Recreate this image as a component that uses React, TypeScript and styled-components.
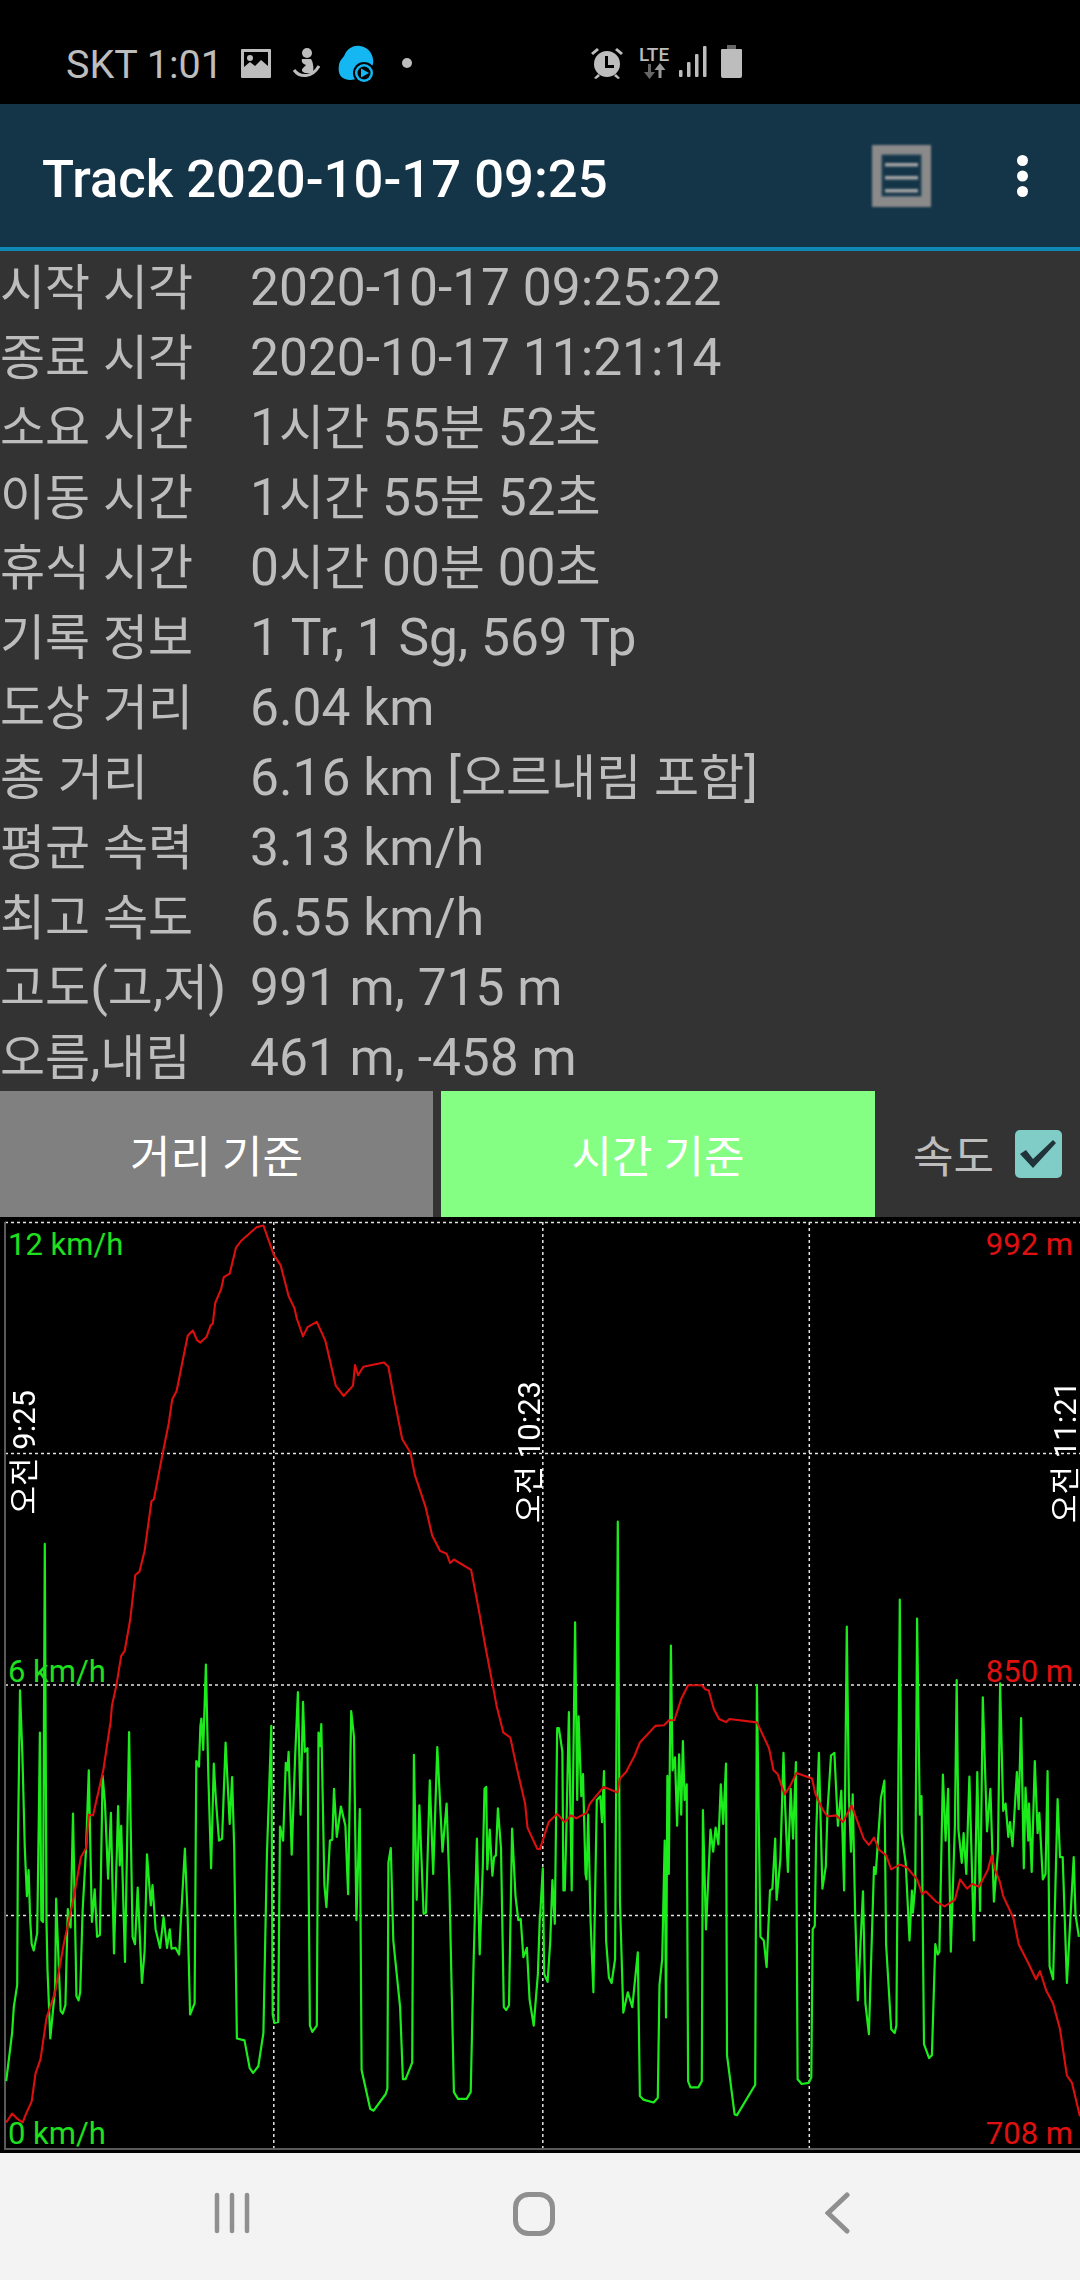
import React from "react";
import styled, { createGlobalStyle } from "styled-components";

const Global = createGlobalStyle`
  html, body { margin: 0; padding: 0; background: #000; }
  body { font-family: Roboto, "Noto Sans CJK KR", sans-serif; }
  #root { width: 1080px; height: 2280px; overflow: hidden; }
`;

const FONT = `Roboto, "Noto Sans CJK KR", sans-serif`;

const Page = styled.div`
  width: 1080px;
  height: 2280px;
  display: flex;
  flex-direction: column;
  background: #333;
  font-family: ${FONT};
`;

const StatusBar = styled.div`
  height: 104px;
  background: #000;
  display: flex;
  align-items: flex-start;
  padding: 45px 0 0 66px;
  box-sizing: border-box;
  color: #bcbcbc;
`;

const StatusText = styled.span`
  font-size: 39.5px;
  line-height: 40px;
  width: 175px;
  white-space: nowrap;
  color: #bdbdbd;
`;

const StatusIcon = styled.svg<{ $ml?: number; $mt?: number }>`
  display: block;
  flex: none;
  margin-left: ${(p) => p.$ml ?? 0}px;
  margin-top: ${(p) => p.$mt ?? 0}px;
`;

const LteBlock = styled.div`
  width: 30px;
  margin-left: 15px;
  margin-top: 1px;
  display: flex;
  flex-direction: column;
  align-items: center;
`;

const LteText = styled.span`
  font-size: 19px;
  line-height: 17px;
  font-weight: 500;
  color: #bdbdbd;
`;

const Header = styled.header`
  height: 147px;
  box-sizing: border-box;
  background: #143548;
  border-bottom: 4px solid #1088b5;
  display: flex;
  align-items: center;
  padding-left: 42px;
`;

const Title = styled.h1`
  margin: 0;
  padding-top: 6px;
  flex: 1;
  font-size: 52.6px;
  line-height: 60px;
  font-weight: 500;
  color: #fff;
  white-space: nowrap;
`;

const ListIcon = styled.svg`
  display: block;
  flex: none;
  filter: blur(0.8px);
  margin-right: 86px;
`;

const MoreIcon = styled.svg`
  display: block;
  flex: none;
  margin-right: 52px;
`;

const InfoList = styled.div`
  height: 840px;
  display: flex;
  flex-direction: column;
  background: #333;
`;

const InfoRow = styled.div`
  height: 70px;
  box-sizing: border-box;
  padding-top: 4px;
  display: grid;
  grid-template-columns: 250px 1fr;
  align-items: start;
  font-size: 51.5px;
  line-height: 66px;
  color: #bdbdbd;
  white-space: nowrap;
`;

const InfoCell = styled.span``;

const Hangul = styled.span`
  font-size: 49px;
`;

const ModeBar = styled.div`
  height: 126px;
  display: flex;
  background: #333;
`;

const ModeButton = styled.div<{ $active?: boolean; $w: number }>`
  width: ${(p) => p.$w}px;
  margin-right: 8px;
  background: ${(p) => (p.$active ? "#84ff84" : "#808080")};
  color: #fff;
  font-size: 44px;
  display: flex;
  align-items: center;
  justify-content: center;
`;

const SpeedToggle = styled.div`
  display: flex;
  align-items: center;
  margin-left: 30px;
  font-size: 44px;
  color: #bdbdbd;
`;

const CheckBox = styled.div`
  width: 47px;
  height: 48px;
  margin-left: 21px;
  border-radius: 5px;
  background: #7fcdc6;
  display: flex;
  align-items: center;
  justify-content: center;
`;

const Chart = styled.div`
  position: relative;
  height: 936px;
  background: #000;
  overflow: hidden;
`;

const ChartSvg = styled.svg`
  position: absolute;
  inset: 0;
  display: block;
`;

const AxisLabel = styled.span<{ $color: string; $top: number; $side: "left" | "right" }>`
  position: absolute;
  top: ${(p) => p.$top}px;
  ${(p) => (p.$side === "left" ? "left: 8px;" : "right: 7px;")}
  font-size: 31px;
  line-height: 30px;
  color: ${(p) => p.$color};
  white-space: nowrap;
`;

const TimeLabel = styled.span<{ $left: number; $bottom: number }>`
  position: absolute;
  left: ${(p) => p.$left}px;
  bottom: ${(p) => p.$bottom}px;
  writing-mode: vertical-rl;
  text-orientation: sideways;
  transform: rotate(180deg);
  font-size: 31px;
  line-height: 30px;
  color: #fff;
  white-space: nowrap;
`;

const NavBar = styled.nav`
  flex: 1;
  background: #f3f3f3;
  display: flex;
  align-items: flex-start;
  padding: 39px 0 0 214px;
`;

const NavIcon = styled.svg<{ $ml?: number }>`
  display: block;
  flex: none;
  margin-left: ${(p) => p.$ml ?? 0}px;
`;

const z3 = (a: number[]) => pairs(a, (x, y) => [x / 2.904, 1210 + y / 2.904]);
const z4 = (a: number[]) => pairs(a, (x, y) => [540 + x / 2.904, 1210 + y / 2.904]);
const z5 = (a: number[]) => pairs(a, (x, y) => [x / 2.904, 1700 + y / 2.703]);
const z6 = (a: number[]) => pairs(a, (x, y) => [540 + x / 2.904, 1700 + y / 2.703]);

function pairs(a: number[], f: (x: number, y: number) => number[]) {
  const out: string[] = [];
  for (let i = 0; i + 1 < a.length; i += 2) {
    const [x, y] = f(a[i], a[i + 1]);
    out.push(`${x.toFixed(1)},${y.toFixed(1)}`);
  }
  return out;
}

const redPts = [
  ...z5([18,1142,35,1118,48,1130,66,1142,75,1120,92,1085,103,1010,118,970,135,860,160,790,185,660,215,530,235,425,250,400,258,310,270,312,300,190,320,65]),
  ...z3([320,1500,325,1440,338,1380,352,1295,362,1280,378,1190,393,1060,405,1050,420,990,440,845,447,840,470,720,490,620,500,550,513,525,530,440,545,365,560,350,572,378,582,385,600,368,612,335,618,330,625,270,642,230,650,195,667,185,685,110,700,90,745,50,765,45,795,130,815,160,838,250,855,285,862,315,880,367,893,340,920,325,945,380,975,510,998,540,1025,510,1031,450,1040,480,1055,455,1115,443,1128,455,1145,550,1168,665,1192,705,1205,770,1235,860,1255,945,1278,990,1297,998,1307,1025,1318,1015,1368,1045,1390,1160,1410,1270,1432,1385,1442,1440,1462,1518,1482,1532]),
  ...z5([1500,180,1525,280,1532,345,1560,402]),
  ...z6([0,403,25,330,50,308,72,330,90,312,105,320,135,305,145,280,185,235,225,250,232,212,250,195,275,150,290,115,335,70,360,68,375,55,390,55]),
  ...z4([410,1420,430,1380,470,1380,480,1392,490,1395,505,1450,520,1478,540,1487,550,1478,630,1488]),
  ...z6([665,130,678,190,690,200,710,255,725,235,745,197,790,212,800,255,820,295,835,315,860,312,880,330,905,285,940,375,955,392,970,372,985,405,1005,420,1020,458,1045,445,1065,452,1095,485,1110,525,1120,517,1150,545,1175,558,1205,540,1220,485,1240,510,1255,497,1275,505,1300,460,1312,420,1320,455,1335,490,1345,530,1375,590,1390,660,1420,715,1440,755,1452,733,1470,785,1490,820,1510,890,1530,1015,1545,1035,1568,1125]),
].join(" ");

const greenPts = [
  ...z5([18,1030,35,900,40,830,50,770,52,400,58,-26,65,150,72,400,78,530,83,460,88,600,92,660,98,677,108,630,113,300,116,88,120,595,125,600,130,-422,135,600,138,730,146,915,160,780,163,537,170,700,176,840,182,848,190,825,197,565,205,615,212,307,220,700,222,800,228,812,233,790,240,570,250,400,258,190,267,600,275,512,282,640,290,635,298,205,305,280,314,483,322,305,331,685,343,287,348,447,352,340,363,708,375,87,385,640,392,660,400,507,412,765,420,680,427,417,438,555,443,500,452,620,465,670,475,587,485,670,493,620,498,672,510,670,520,688,525,600,537,402,545,590,552,850,565,820,570,165,578,180,582,70,585,50,590,135,598,-96,605,200,613,455,621,172,627,270,636,380,645,375,655,115,667,335,674,208,680,400,688,915,710,920,725,995,735,1008,750,990,765,900,775,420,788,70,792,850,797,873,808,870,813,342,822,380,830,170,835,190,838,140,847,418,857,155,865,-21,873,310,880,5,885,140,893,130,900,880,907,897,920,880,925,88,930,125,933,65,942,500,948,560,958,380,965,378,970,240,978,370,990,288,1003,340,1011,525,1020,30,1028,100,1035,595,1045,295,1050,1000,1075,1105,1085,1110,1120,1065,1125,1050,1128,440,1135,400,1142,650,1162,830,1170,1025,1178,1025,1197,980,1202,148,1210,540,1218,285,1230,578,1237,575,1248,217,1258,470,1270,127,1285,410,1297,280,1305,500,1318,1060,1330,1078,1355,1078,1367,1060,1375,720,1385,375,1393,688,1402,450,1407,240,1412,235,1415,458,1422,350,1430,475,1435,425,1440,420,1446,293,1455,400,1463,830,1470,838,1478,825,1487,348,1497,530,1505,595,1512,592,1520,695,1530,670,1538,810,1550,880,1562,740,1568,580]),
  ...z6([0,590,8,455,12,740,22,762,30,650,36,487,43,605,50,76,55,76,65,140,68,515,72,515,76,370,84,33,92,515,102,-210,108,270,112,44,120,260,125,200,132,470,135,485,140,310,147,600,155,790,165,270,175,260,180,330,186,192,192,650,200,750,208,765,218,700,226,-482,232,540,242,845,255,790,268,830,284,682,290,1070,300,1080,330,1088,342,1075,347,770,355,700,362,380,366,858,370,205,374,470,380,-147,385,190,392,155,398,340,404,147,410,310,415,111,420,270,426,228,430,1030,437,1047,460,1047,470,1030,473,298,482,620,495,350,503,410,510,345,518,390,525,228,532,335,540,172,543,960,565,1120,572,1122,625,1040,630,-40,640,640,650,650,658,722,668,515,675,510,683,375,687,540,698,430,707,143,712,290,720,465,728,240,735,375,743,168,748,1025,760,1038,780,1035,788,1020,792,620,798,610,802,360,810,143,820,510,830,450,835,300,845,150,855,143,865,340,875,245,883,515,891,-198,897,260,903,410,908,255,915,570,923,812,938,517,945,820,955,903,970,452,975,470,990,265,1000,218,1005,660,1020,890,1030,900,1035,880,1045,-271,1050,360,1062,440,1073,650,1080,515,1083,575,1090,500,1095,-220,1103,310,1108,260,1115,930,1130,968,1138,960,1148,660,1155,688,1160,680,1170,202,1178,380,1185,240,1193,680,1205,340,1210,-54,1215,350,1225,440,1230,360,1238,470,1247,207,1260,650,1270,195,1278,570,1286,-7,1298,355,1308,240,1318,545,1330,405,1336,-45,1345,300,1352,280,1360,370,1365,330,1372,395,1385,195,1390,295,1397,49,1405,455,1410,237,1418,380,1420,280,1428,465,1437,165,1445,360,1450,305,1460,485,1468,470,1474,192,1480,720,1490,755,1503,268,1510,425,1518,425,1530,765,1550,425,1555,580,1565,640]),
].join(" ");

const rows: [string, string][] = [
  ["시작 시각", "2020-10-17 09:25:22"],
  ["종료 시각", "2020-10-17 11:21:14"],
  ["소요 시간", "1시간 55분 52초"],
  ["이동 시간", "1시간 55분 52초"],
  ["휴식 시간", "0시간 00분 00초"],
  ["기록 정보", "1 Tr, 1 Sg, 569 Tp"],
  ["도상 거리", "6.04 km"],
  ["총 거리", "6.16 km [오르내림 포함]"],
  ["평균 속력", "3.13 km/h"],
  ["최고 속도", "6.55 km/h"],
  ["고도(고,저)", "991 m, 715 m"],
  ["오름,내림", "461 m, -458 m"],
];

const hLines = [1222.5, 1453.5, 1685, 1915.5];
const vLines = [273.8, 542.8, 809.3];

function Mixed({ text }: { text: string }) {
  return (
    <InfoCell>
      {text.split(/([가-힣]+)/).map((part, i) =>
        i % 2 === 1 ? <Hangul key={i}>{part}</Hangul> : part
      )}
    </InfoCell>
  );
}

export default function App() {
  return (
    <Page>
      <Global />
      <StatusBar>
        <StatusText>SKT 1:01</StatusText>
        <StatusIcon width="30" height="29" viewBox="0 0 30 29" $mt={4}>
          <path fill="#bdbdbd" fillRule="evenodd" d="M1 0h28a1 1 0 0 1 1 1v27a1 1 0 0 1-1 1H1a1 1 0 0 1-1-1V1a1 1 0 0 1 1-1zM3 3v15l6-5 5 4 6-6 7 6V3z" />
          <circle cx="9" cy="9" r="3" fill="#bdbdbd" />
        </StatusIcon>
        <StatusIcon width="28" height="30" viewBox="0 0 28 30" $ml={21} $mt={3} fill="#bdbdbd">
          <circle cx="15" cy="5" r="5" />
          <path d="M10 11h9c2 3 3 8 2 14h-8c-3-1-4-3-2-5l3-3c-3-1-5-3-4-6z" />
          <path d="M2 22c6 8 18 8 25-4" fill="none" stroke="#bdbdbd" strokeWidth="3" />
        </StatusIcon>
        <StatusIcon width="40" height="40" viewBox="0 0 40 40" $ml={16}>
          <path fill="#15b7f2" d="M3 20C4 14 7 14 9 9c3-6 9-9 15-8 7 1 12 6 13 13 1 5-1 8-4 10-2 4-6 6-10 8-4 3-9 4-14 2-6-2-7-8-6-14z" />
          <circle cx="28" cy="28" r="11" fill="#000" />
          <circle cx="28" cy="28" r="9" fill="#15b7f2" />
          <circle cx="28" cy="28" r="6.5" fill="#000" />
          <path fill="#15b7f2" d="M25 23.5l8 4.5-8 4.5z" />
        </StatusIcon>
        <StatusIcon width="10" height="10" viewBox="0 0 10 10" $ml={26} $mt={13}>
          <circle cx="5" cy="5" r="5" fill="#bdbdbd" />
        </StatusIcon>
        <StatusIcon width="34" height="32" viewBox="0 0 34 32" $ml={178} $mt={2} fill="#bdbdbd">
          <path d="M1 6l6-5 2 2-6 5zM33 6l-6-5-2 2 6 5z" />
          <circle cx="17" cy="17" r="13" />
          <path d="M8 27l-4 4 2 1 4-3zM26 27l4 4-2 1-4-3z" />
          <path d="M15 9h3v9h6v3h-9z" fill="#000" />
        </StatusIcon>
        <LteBlock>
          <LteText>LTE</LteText>
          <svg width="24" height="16" viewBox="0 0 24 16">
            <path fill="#666" d="M6 1h3v8h4l-5.5 7L2 9h4z" />
            <path fill="#999" d="M18 0l5.500 7h-4v8h-3V7h-4z" />
          </svg>
        </LteBlock>
        <StatusIcon width="28" height="31" viewBox="0 0 28 31" $ml={10} $mt={1} fill="#bdbdbd">
          <rect x="0" y="24" width="3.500" height="7" rx="1" />
          <rect x="8" y="16" width="3.500" height="15" rx="1" />
          <rect x="16" y="8" width="3.500" height="23" rx="1" />
          <rect x="24" y="0" width="3.500" height="31" rx="1" />
        </StatusIcon>
        <StatusIcon width="21" height="33" viewBox="0 0 21 33" $ml={14} fill="#bdbdbd">
          <path fill="#666" d="M6 0h9v4H6z" />
          <path d="M1 4h19a1 1 0 0 1 1 1v26a2 2 0 0 1-2 2H2a2 2 0 0 1-2-2V5a1 1 0 0 1 1-1z" />
        </StatusIcon>
      </StatusBar>

      <Header>
        <Title>Track 2020-10-17 09:25</Title>
        <ListIcon width="59" height="62" viewBox="0 0 59 62">
          <rect width="59" height="62" fill="#8a8a8a" />
          <rect x="10" y="10" width="39" height="41" fill="#143548" stroke="#2a4a5c" />
          <rect x="13" y="18" width="33" height="3.500" fill="#a5a5a5" />
          <rect x="13" y="31" width="33" height="3.500" fill="#a5a5a5" />
          <rect x="13" y="44" width="33" height="3.500" fill="#a5a5a5" />
        </ListIcon>
        <MoreIcon width="11" height="42" viewBox="0 0 11 42" fill="#fff">
          <circle cx="5.500" cy="5.500" r="5.500" />
          <circle cx="5.500" cy="21" r="5.500" />
          <circle cx="5.500" cy="36.500" r="5.500" />
        </MoreIcon>
      </Header>

      <InfoList>
        {rows.map(([label, value]) => (
          <InfoRow key={label}>
            <Mixed text={label} />
            <Mixed text={value} />
          </InfoRow>
        ))}
      </InfoList>

      <ModeBar>
        <ModeButton $w={433}>거리 기준</ModeButton>
        <ModeButton $w={434} $active>시간 기준</ModeButton>
        <SpeedToggle>
          속도
          <CheckBox>
            <svg width="38" height="28" viewBox="0 0 38 28">
              <path d="M1 14l6-4 7 9L34 0l3 3-23 25z" fill="#20343a" />
            </svg>
          </CheckBox>
        </SpeedToggle>
      </ModeBar>

      <Chart>
        <ChartSvg width="1080" height="936" viewBox="0 1217 1080 936">
          {hLines.map((y) => (
            <line key={y} x1="5" x2="1080" y1={y} y2={y} stroke="#e4e4e4" strokeWidth="1.500" strokeDasharray="3 3" />
          ))}
          {vLines.map((x) => (
            <line key={x} x1={x} x2={x} y1="1222" y2="2148" stroke="#e4e4e4" strokeWidth="1.500" strokeDasharray="3 3" />
          ))}
          <line x1="5" x2="5" y1="1222" y2="2150" stroke="#5a5a5a" strokeWidth="2" />
          <line x1="4" x2="1080" y1="2149" y2="2149" stroke="#5a5a5a" strokeWidth="2" />
          <polyline points={greenPts} fill="none" stroke="#1cec1c" strokeWidth="2.200" strokeLinejoin="round" />
          <polyline points={redPts} fill="none" stroke="#dc0f0f" strokeWidth="2.100" strokeLinejoin="round" />
        </ChartSvg>
        <AxisLabel $side="left" $top={13} $color="#1fe01f">12 km/h</AxisLabel>
        <AxisLabel $side="left" $top={440} $color="#1fe01f">6 km/h</AxisLabel>
        <AxisLabel $side="left" $top={902} $color="#1fe01f">0 km/h</AxisLabel>
        <AxisLabel $side="right" $top={13} $color="#e01010">992 m</AxisLabel>
        <AxisLabel $side="right" $top={440} $color="#e01010">850 m</AxisLabel>
        <AxisLabel $side="right" $top={902} $color="#e01010">708 m</AxisLabel>
        <TimeLabel $left={10} $bottom={638}>오전 9:25</TimeLabel>
        <TimeLabel $left={515} $bottom={630}>오전 10:23</TimeLabel>
        <TimeLabel $left={1051} $bottom={630}>오전 11:21</TimeLabel>
      </Chart>

      <NavBar>
        <NavIcon width="36" height="42" viewBox="0 0 36 42" stroke="#8f8f8f" strokeWidth="4.500" strokeLinecap="round">
          <line x1="3" y1="3" x2="3" y2="39" />
          <line x1="18" y1="3" x2="18" y2="39" />
          <line x1="33" y1="3" x2="33" y2="39" />
        </NavIcon>
        <NavIcon width="42" height="44" viewBox="0 0 42 44" $ml={263}>
          <rect x="2.500" y="2.500" width="37" height="39" rx="13" fill="none" stroke="#8f8f8f" strokeWidth="5" />
        </NavIcon>
        <NavIcon width="25" height="42" viewBox="0 0 25 42" $ml={270}>
          <path d="M22 3L3 21l19 18" fill="none" stroke="#8f8f8f" strokeWidth="5" strokeLinecap="round" strokeLinejoin="miter" />
        </NavIcon>
      </NavBar>
    </Page>
  );
}
